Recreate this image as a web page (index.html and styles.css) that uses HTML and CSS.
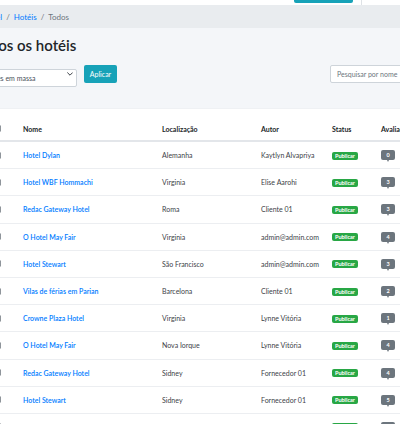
FILE: index.html
```html
<!DOCTYPE html>
<html lang="pt">
<head>
<meta charset="utf-8">
<title>Todos os hotéis</title>
<link rel="stylesheet" href="styles.css">
</head>
<body>
<header class="topbar">
  <div class="top-btn"></div>
  <div class="top-divider"></div>
</header>
<div class="page">
  <nav class="crumbs">
    <a href="#">Painel</a><span class="sep">/</span><a href="#">Hotéis</a><span class="sep">/</span><span class="current">Todos</span>
  </nav>
  <section class="content">
    <h1 class="title">Todos os hotéis</h1>
    <div class="toolbar">
      <div class="select-wrap">
        <select class="bulk"><option>Ações em massa</option></select>
        <svg class="chev" viewBox="0 0 10 6" width="6" height="4"><path d="M1 1l4 4 4-4" fill="none" stroke="#343a40" stroke-width="1.6" stroke-linecap="round" stroke-linejoin="round"/></svg>
      </div>
      <button class="btn-apply">Aplicar</button>
      <input class="search" type="text" placeholder="Pesquisar por nome">
    </div>
  </section>
  <div class="card">
    <table class="hotels">
      <colgroup>
        <col class="c-check"><col class="c-name"><col class="c-loc"><col class="c-author"><col class="c-status"><col class="c-rate">
      </colgroup>
      <thead>
        <tr><th><span class="check"></span></th><th>Nome</th><th>Localização</th><th>Autor</th><th>Status</th><th>Avaliações</th></tr>
      </thead>
      <tbody>
        <tr><td><span class="check"></span></td><td><a href="#">Hotel Dylan</a></td><td>Alemanha</td><td>Kaytlyn Alvapriya</td><td><span class="pub">Publicar</span></td><td><span class="rate">0</span></td></tr>
        <tr><td><span class="check"></span></td><td><a href="#">Hotel WBF Hommachi</a></td><td>Virginia</td><td>Elise Aarohi</td><td><span class="pub">Publicar</span></td><td><span class="rate">3</span></td></tr>
        <tr><td><span class="check"></span></td><td><a href="#">Redac Gateway Hotel</a></td><td>Roma</td><td>Cliente 01</td><td><span class="pub">Publicar</span></td><td><span class="rate">3</span></td></tr>
        <tr><td><span class="check"></span></td><td><a href="#">O Hotel May Fair</a></td><td>Virginia</td><td>admin@admin.com</td><td><span class="pub">Publicar</span></td><td><span class="rate">4</span></td></tr>
        <tr><td><span class="check"></span></td><td><a href="#">Hotel Stewart</a></td><td>São Francisco</td><td>admin@admin.com</td><td><span class="pub">Publicar</span></td><td><span class="rate">3</span></td></tr>
        <tr><td><span class="check"></span></td><td><a href="#">Vilas de férias em Parian</a></td><td>Barcelona</td><td>Cliente 01</td><td><span class="pub">Publicar</span></td><td><span class="rate">2</span></td></tr>
        <tr><td><span class="check"></span></td><td><a href="#">Crowne Plaza Hotel</a></td><td>Virginia</td><td>Lynne Vitória</td><td><span class="pub">Publicar</span></td><td><span class="rate">1</span></td></tr>
        <tr><td><span class="check"></span></td><td><a href="#">O Hotel May Fair</a></td><td>Nova Iorque</td><td>Lynne Vitória</td><td><span class="pub">Publicar</span></td><td><span class="rate">4</span></td></tr>
        <tr><td><span class="check"></span></td><td><a href="#">Redac Gateway Hotel</a></td><td>Sidney</td><td>Fornecedor 01</td><td><span class="pub">Publicar</span></td><td><span class="rate">4</span></td></tr>
        <tr><td><span class="check"></span></td><td><a href="#">Hotel Stewart</a></td><td>Sidney</td><td>Fornecedor 01</td><td><span class="pub">Publicar</span></td><td><span class="rate">5</span></td></tr>
        <tr><td><span class="check"></span></td><td><a href="#">Hotel Dylan</a></td><td>Alemanha</td><td>Cliente 01</td><td><span class="pub">Publicar</span></td><td><span class="rate">2</span></td></tr>
      </tbody>
    </table>
  </div>
</div>
</body>
</html>
```

FILE: styles.css
```css
html, body {
  margin: 0;
  padding: 0;
}
body {
  width: 400px;
  height: 424px;
  overflow: hidden;
  background: #f4f6f9;
  font-family: Lato, "Noto Sans", sans-serif;
  color: #212529;
}

/* top navbar (mostly scrolled out) */
.topbar {
  height: 5px;
  background: #fff;
  display: flex;
  align-items: flex-start;
  padding-left: 294px;
  gap: 8px;
}
.top-btn {
  width: 59px;
  height: 3px;
  background: #17a2b8;
  border-radius: 0 0 2px 2px;
}
.top-divider {
  width: 1px;
  height: 5px;
  background: #dee2e6;
}

.page {
  margin-left: -26px;
  width: 480px;
}

/* breadcrumb */
.crumbs {
  height: 23px;
  background: #e9ecef;
  padding-left: 7px;
  display: flex;
  align-items: center;
  font-size: 8px;
  color: #6c757d;
}
.crumbs a {
  color: #007bff;
  text-decoration: none;
}
.crumbs .sep {
  padding: 0 4px;
  color: #6c757d;
}

/* heading + toolbar */
.content {
  padding: 8px 0 26px;
}
.title {
  margin: 0;
  font-size: 15px;
  line-height: 18px;
  font-weight: 600;
  color: #212529;
}
.toolbar {
  display: flex;
  align-items: stretch;
  height: 18px;
  margin-top: 11px;
}
.select-wrap {
  position: relative;
  width: 103px;
}
.bulk {
  appearance: none;
  -webkit-appearance: none;
  box-sizing: border-box;
  width: 100%;
  height: 18px;
  margin: 0;
  padding: 0 0 0 10px;
  border: 1px solid #ced4da;
  border-radius: 2px;
  background: #fff;
  font-family: inherit;
  font-size: 7px;
  color: #495057;
}
.chev {
  position: absolute;
  right: 4px;
  top: 7px;
}
.btn-apply {
  margin: 0 0 0 7px;
  width: 33px;
  height: 18px;
  padding: 0;
  border: 0;
  border-radius: 2px;
  background: #17a2b8;
  color: #fff;
  font-family: inherit;
  font-size: 7px;
}
.search {
  box-sizing: border-box;
  margin: 0 0 0 auto;
  width: 124px;
  height: 18px;
  padding: 0 0 0 6px;
  border: 1px solid #ced4da;
  border-radius: 2px;
  background: #fff;
  font-family: inherit;
  font-size: 7px;
  color: #495057;
}
.search::placeholder {
  color: #6c757d;
}

/* card with table */
.card {
  background: #fff;
  padding: 8px 0 0 13px;
  box-shadow: 0 0 1px rgba(0,0,0,.12);
}
.hotels {
  width: 467px;
  table-layout: fixed;
  border-collapse: separate;
  border-spacing: 0;
  font-size: 7px;
}
.c-check { width: 30px; }
.c-name { width: 139px; }
.c-loc { width: 99px; }
.c-author { width: 71px; }
.c-status { width: 49px; }
.hotels th,
.hotels td {
  box-sizing: border-box;
  padding: 0 0 0 6px;
  text-align: left;
  vertical-align: middle;
  white-space: nowrap;
  overflow: hidden;
}
.hotels th {
  height: 25px;
  font-weight: 700;
  color: #212529;
  border-bottom: 2px solid #e3e6ea;
}
.hotels td {
  height: 27.2px;
  color: #3d4247;
  border-bottom: 1px solid #eceef1;
}
.hotels th:first-child,
.hotels td:first-child {
  padding-left: 7px;
}
.hotels a {
  color: #007bff;
  font-weight: 600;
  text-decoration: none;
}
.check {
  display: block;
  box-sizing: border-box;
  width: 7px;
  height: 7px;
  border: 1px solid #8f959b;
  border-radius: 1px;
  background: #fff;
}
.pub {
  display: inline-block;
  padding: 0 3px;
  height: 8px;
  line-height: 8px;
  border-radius: 2px;
  background: #28a745;
  color: #fff;
  font-size: 5.5px;
  font-weight: 700;
}
.rate {
  position: relative;
  display: inline-block;
  width: 14px;
  height: 10px;
  line-height: 10px;
  border-radius: 2px;
  background: #6c757d;
  color: #fff;
  font-size: 5.5px;
  font-weight: 700;
  text-align: center;
  margin-top: -2px;
}
.rate::after {
  content: "";
  position: absolute;
  left: 6px;
  bottom: -2px;
  border-left: 1.5px solid transparent;
  border-right: 1.5px solid transparent;
  border-top: 2px solid #6c757d;
}
```
